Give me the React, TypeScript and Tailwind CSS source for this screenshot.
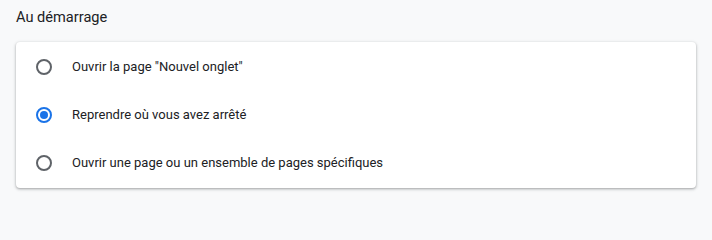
const options = [
  { label: 'Ouvrir la page "Nouvel onglet"', checked: false },
  { label: 'Reprendre où vous avez arrêté', checked: true },
  { label: 'Ouvrir une page ou un ensemble de pages spécifiques', checked: false },
];

function Radio({ checked }: { checked: boolean }) {
  return (
    <span
      className={
        checked
          ? 'w-4 h-4 rounded-full border-2 border-[#1a73e8] flex items-center justify-center shrink-0'
          : 'w-4 h-4 rounded-full border-2 border-[#5f6368] shrink-0'
      }
    >
      {checked && <span className="w-2 h-2 rounded-full bg-[#1a73e8]" />}
    </span>
  );
}

export default function App() {
  return (
    <div
      className="w-full min-h-screen bg-[#f8f9fa] text-[#202124]"
      style={{ fontFamily: 'Roboto, "Liberation Sans", Arial, sans-serif' }}
    >
      <h2 className="px-4 pt-[7px] text-[14.6px] leading-5 font-normal mb-[15px]">Au démarrage</h2>
      <div className="mx-4 bg-white rounded shadow-[0_1px_2px_rgba(60,64,67,0.3),0_1px_3px_1px_rgba(60,64,67,0.15)] py-px">
        {options.map((o) => (
          <label key={o.label} className="flex items-center h-12 pl-5 gap-5 text-[13px]">
            <Radio checked={o.checked} />
            <span>{o.label}</span>
          </label>
        ))}
      </div>
    </div>
  );
}
